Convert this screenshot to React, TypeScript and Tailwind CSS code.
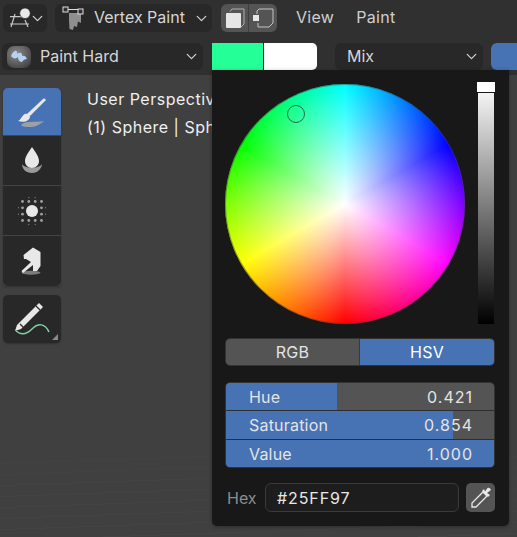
import { ChevronDown } from 'lucide-react'

const font = { fontFamily: 'Inter, "Liberation Sans", sans-serif' }

function Chevron({ className = '' }: { className?: string }) {
  return <ChevronDown size={17} strokeWidth={1.8} className={`shrink-0 text-[#d0d0d0] ${className}`} />
}

function OrientIcon() {
  return (
    <svg width="26" height="24" viewBox="0 0 26 24" fill="none" className="shrink-0">
      <path d="M5 10.7H24M5 18H24M10 8L6 21M20 14L23 21" stroke="#c8c8c8" strokeWidth="1.2" />
      <circle cx="20" cy="7.3" r="5.2" fill="#e8e8e8" stroke="#282828" strokeWidth="0.6" />
    </svg>
  )
}

function ModeIcon() {
  return (
    <svg width="22" height="24" viewBox="0 0 22 24" className="shrink-0">
      <path d="M7 7H19V17L16 15.5L15 21L12 20L11 24L7.5 23L7 14Z" fill="#8f8f8f" />
      <rect x="1" y="1" width="5" height="5" fill="#303030" stroke="#e0e0e0" />
      <rect x="16" y="3" width="5" height="5" fill="#303030" stroke="#e0e0e0" />
      <path d="M6 3.5H16" stroke="#e0e0e0" />
    </svg>
  )
}

function BrushThumb() {
  return (
    <svg width="24" height="22" viewBox="0 0 24 22" className="shrink-0">
      <defs>
        <radialGradient id="thumb" cx="0.4" cy="0.35" r="0.8">
          <stop offset="0" stopColor="#8a8a8a" />
          <stop offset="1" stopColor="#3c3c3c" />
        </radialGradient>
      </defs>
      <rect x="0" y="0" width="24" height="22" rx="7" fill="url(#thumb)" />
      <path d="M4 10C7 3 11 4 10 8C13 5 16 8 15 10C18 9 19 11 20 13C18 13 16 14 15 16C12 16 11 13 11 11C9 13 6 13 4 10Z" fill="#b6d2f0" />
    </svg>
  )
}

function ToolButton({ active, last, first, children }: { active?: boolean; last?: boolean; first?: boolean; children: React.ReactNode }) {
  return (
    <div
      className={`flex w-[58px] items-center justify-center ${first ? 'h-[48px] rounded-t-[5px]' : 'h-[50px]'} ${active ? 'bg-[#4772b3]' : 'bg-[#282828]'} ${last ? 'rounded-b-[5px]' : 'border-b border-[#444444]'}`}
    >
      {children}
    </div>
  )
}

function SliderRow({ label, value, pct, height, divider }: { label: string; value: string; pct: number; height: string; divider?: boolean }) {
  return (
    <div className={`relative flex items-center justify-between bg-[#545454] pl-[23px] pr-[21px] ${height} ${divider ? 'border-b border-[#2e2e2e]' : ''}`}>
      <div className="absolute inset-y-0 left-0 bg-[#4772b3]" style={{ width: `${pct}%` }} />
      <span className="relative text-base tracking-[0.2px] text-[#e4e4e4]">{label}</span>
      <span className="relative text-base tracking-[1px] text-[#e4e4e4]">{value}</span>
    </div>
  )
}

const spotDots = [
  [-9.5, -9.5], [-3.2, -9.5], [3.2, -9.5], [9.5, -9.5],
  [-9.5, 9.5], [-3.2, 9.5], [3.2, 9.5], [9.5, 9.5],
  [-9.5, -3.2], [9.5, -3.2], [-9.5, 3.2], [9.5, 3.2],
]
const spotDotsSmall = [
  [-3.2, -13.5], [3.2, -13.5], [-3.2, 13.5], [3.2, 13.5],
  [-13.5, -3.2], [-13.5, 3.2], [13.5, -3.2], [13.5, 3.2],
]

export default function App() {
  return (
    <div style={font} className="relative flex h-[537px] w-[517px] flex-col overflow-hidden bg-[#404040]">
      {/* header */}
      <div className="flex h-[37px] shrink-0 items-start bg-[#303030] pl-[3px] pt-[4px]">
        <div className="flex h-[28px] w-[44px] shrink-0 items-center rounded-[6px] bg-[#282828] pl-[2px]">
          <OrientIcon />
          <Chevron className="ml-[-2px]" />
        </div>
        <div className="ml-[8px] flex h-[28px] w-[157px] shrink-0 items-center rounded-[6px] bg-[#282828] pl-[7px] pr-[2px] text-base text-[#d6d6d6]">
          <ModeIcon />
          <span className="ml-[10px] flex-1 whitespace-nowrap pb-[2px]">Vertex Paint</span>
          <Chevron />
        </div>
        <div className="ml-[9px] flex h-[28px] w-[56px] shrink-0 overflow-hidden rounded-[6px] bg-[#545454]">
          <div className="flex w-[28px] items-center justify-center border-r border-[#3f3f3f]">
            <svg width="24" height="24" viewBox="0 0 24 24" fill="none">
              <path d="M7 5.5L9 3H21V18L18 21" stroke="#b0b0b0" strokeWidth="1" />
              <rect x="3" y="7" width="15" height="15" rx="1" fill="#e6e6e6" />
            </svg>
          </div>
          <div className="flex flex-1 items-center justify-center">
            <svg width="24" height="24" viewBox="0 0 24 24" fill="none">
              <path d="M6 8V5L8 3H22V17L18 21H7V17" stroke="#c4c4c4" strokeWidth="1" />
              <rect x="2" y="9" width="6" height="6" fill="#e6e6e6" />
            </svg>
          </div>
        </div>
        <span className="ml-[19px] text-base leading-[26px] tracking-[0.3px] text-[#cfcfcf]">View</span>
        <span className="ml-[22px] text-base leading-[26px] tracking-[0.3px] text-[#cfcfcf]">Paint</span>
      </div>

      {/* tool settings */}
      <div className="flex h-[38px] shrink-0 items-start bg-[#303030] pl-[2px] pt-[6px]">
        <div className="flex h-[27px] w-[201px] shrink-0 items-center rounded-[6px] bg-[#282828] pl-[5px] pr-[3px] text-base text-[#d6d6d6]">
          <BrushThumb />
          <span className="ml-[9px] flex-1 pb-[2px]">Paint Hard</span>
          <Chevron />
        </div>
        <div className="ml-[9px] flex h-[27px] w-[105px] shrink-0 overflow-hidden rounded-r-[5px]">
          <div className="w-[52px] border-r border-[#1d1d1d] bg-[#25ff97]" />
          <div className="flex-1 bg-white" />
        </div>
        <div className="ml-[18px] flex h-[27px] w-[148px] shrink-0 items-center justify-between rounded-[6px] bg-[#282828] pl-3 pr-[3px] text-base text-[#d6d6d6]">
          <span className="pb-[2px]">Mix</span>
          <Chevron />
        </div>
        <div className="ml-[8px] h-[27px] w-[30px] shrink-0 rounded-l-[6px] bg-[#4772b3]" />
      </div>

      {/* viewport */}
      <div className="flex flex-1 items-start pl-[3px] pt-[13px]">
        <div className="flex flex-col">
          <div className="shadow-[0_1px_2px_rgba(0,0,0,0.25)]">
            <ToolButton active first>
              <svg width="31" height="32" viewBox="-1 0 31 32">
                <path d="M9 18L25 3C26.5 2 28 3 27.5 4.5L12 20Z" fill="#e8e8e8" />
                <path d="M0 25C3 24 4 19 7 18C10 17 12 19 12 21C11 25 6 27 0 25Z" fill="#e8e8e8" />
                <path d="M3 29C8 24 16 27 26 25C21 29 18 31 11 31C8 31 5 31 3 29Z" fill="#9a9fa8" />
              </svg>
            </ToolButton>
            <ToolButton>
              <svg width="24" height="30" viewBox="0 0 24 30">
                <path d="M2 18C2 23 6 27 12 27C18 27 22 22 22 18C19 23 5 23 2 18Z" fill="#9a9a9a" />
                <path d="M12 1C15 6 19 10 19 15C19 19 16 22 12 22C8 22 5 19 5 15C5 10 9 6 12 1Z" fill="#e8e8e8" />
              </svg>
            </ToolButton>
            <ToolButton>
              <svg width="30" height="30" viewBox="-15 -15 30 30">
                <circle cx="0" cy="0" r="6" fill="#e8e8e8" />
                {spotDots.map(([x, y]) => (
                  <circle key={`${x}/${y}`} cx={x} cy={y} r="1.4" fill="#a0a0a0" />
                ))}
                {spotDotsSmall.map(([x, y]) => (
                  <circle key={`${x}/${y}`} cx={x} cy={y} r="0.7" fill="#777777" />
                ))}
              </svg>
            </ToolButton>
            <ToolButton last>
              <svg width="24" height="30" viewBox="0 0 24 30">
                <ellipse cx="11" cy="26.7" rx="9.5" ry="2" fill="#7c7c7c" />
                <path d="M3.5 9L13 1.5L20.5 6V20L17 25H13V19L3 27L1.5 25L11 16L6 13H4Z" fill="#e8e8e8" />
              </svg>
            </ToolButton>
          </div>
          <div className="relative mt-[9px] flex h-[48px] w-[58px] items-center justify-center rounded-[5px] bg-[#282828] shadow-[0_1px_2px_rgba(0,0,0,0.25)]">
            <svg width="40" height="34" viewBox="0 0 40 34" fill="none">
              <path d="M5 23L27 1L31 5L9 27L3 29Z" fill="#e8e8e8" />
              <path d="M24 4L28 8M8 22L12 26" stroke="#282828" strokeWidth="1.2" />
              <path d="M4 29C10 34 16 31 20 27C26 21 33 21 37 30" stroke="#7fd0a4" strokeWidth="1.5" />
            </svg>
            <div className="absolute bottom-[3px] right-[3px] h-0 w-0 border-b-[6px] border-l-[6px] border-b-[#8a8a8a] border-l-transparent" />
          </div>
        </div>
        <div className="ml-[26px] mt-[-3px] text-base leading-[28px] tracking-[0.5px] text-[#efefef]">
          <div className="whitespace-nowrap">User Perspective</div>
          <div className="whitespace-nowrap">(1) Sphere | Sphere</div>
        </div>
      </div>

      {/* faint floor grid lines at the bottom of the viewport */}
      <div className="absolute inset-x-0 bottom-0 h-[140px] bg-[repeating-linear-gradient(178deg,rgba(255,255,255,0.022)_0px,rgba(255,255,255,0.022)_1px,transparent_1px,transparent_11px)] [mask-image:linear-gradient(transparent,black)]" />

      {/* color popup */}
      <div className="absolute left-[212px] top-[70px] flex h-[456px] w-[297px] flex-col rounded-b-[5px] bg-[#181818] pl-[13px] pr-[14px] shadow-[0_1px_4px_rgba(0,0,0,0.3)]">
        <div className="flex h-[254px] items-start pt-[14px]">
          <div className="relative h-[240px] w-[240px] shrink-0 rounded-full bg-[conic-gradient(#00ffff,#0000ff,#ff00ff,#ff0000,#ffff00,#00ff00,#00ffff)]">
            <div className="absolute inset-0 rounded-full border border-[#44444480] bg-[radial-gradient(closest-side,#ffffff,rgba(255,255,255,0))]" />
            <div className="absolute left-[62px] top-[21px] h-[18px] w-[18px] rounded-full border border-[#2a6a4a]" />
          </div>
          <div className="relative ml-[13px] mt-[-2px] h-[242px] w-[16px] shrink-0 bg-[linear-gradient(#ffffff,#000000)]">
            <div className="absolute inset-x-[-1px] top-0 h-[11px] border-b border-[#181818] bg-white" />
          </div>
        </div>

        <div className="mt-[14px] flex h-[28px] overflow-hidden rounded-[5px] border border-[#333333] text-base tracking-[0.3px] text-[#e4e4e4]">
          <div className="flex w-[134px] items-center justify-center border-r border-[#3a3a3a] bg-[#545454]">RGB</div>
          <div className="flex flex-1 items-center justify-center bg-[#4772b3] text-white">HSV</div>
        </div>

        <div className="mt-[16px] overflow-hidden rounded-[5px] border border-[#333333]">
          <SliderRow label="Hue" value="0.421" pct={41.3} height="h-[28px]" divider />
          <SliderRow label="Saturation" value="0.854" pct={84.8} height="h-[29px]" divider />
          <SliderRow label="Value" value="1.000" pct={100} height="h-[27px]" />
        </div>

        <div className="mt-[15px] flex h-[29px] items-center">
          <span className="ml-[2px] w-[38px] text-base text-[#8c8c8c]">Hex</span>
          <div className="flex h-[29px] w-[194px] items-center rounded-[6px] border border-[#3a3a3a] bg-[#1d1d1d] pl-[11px] text-base tracking-[0.9px] text-[#e8e8e8]">
            #25FF97
          </div>
          <div className="ml-[7px] flex h-[29px] w-[29px] items-center justify-center rounded-[5px] bg-[#545454]">
            <svg width="22" height="22" viewBox="0 0 22 22" fill="none">
              <path d="M13 5L17 9L6 20L2 20L2 16Z" stroke="#e8e8e8" strokeWidth="1.3" />
              <path d="M12 4L18 10L20 8L17 6L21 3C20 1 19 0.5 17.5 1L15 4.5L14 2Z" fill="#e8e8e8" />
            </svg>
          </div>
        </div>
      </div>
    </div>
  )
}
